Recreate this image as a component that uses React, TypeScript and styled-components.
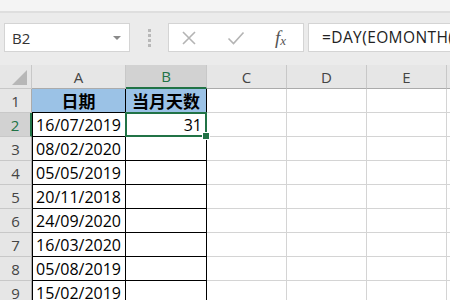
import { createGlobalStyle, styled } from "styled-components";

const GlobalStyle = createGlobalStyle`
  html, body {
    margin: 0;
    padding: 0;
    width: 450px;
    height: 300px;
    overflow: hidden;
    background: #ffffff;
  }
`;

const dates = [
  "16/07/2019",
  "08/02/2020",
  "05/05/2019",
  "20/11/2018",
  "24/09/2020",
  "16/03/2020",
  "05/08/2019",
  "15/02/2019",
];

const columns = ["A", "B", "C", "D", "E", "F"];
const colWidths = "32px 94px 81px 80px 80px 80px 80px";

export default function App() {
  return (
    <>
      <GlobalStyle />
      <Window>
        <TopStrip />
        <FormulaBar>
          <NameBox>
            <span>B2</span>
            <DropArrow />
          </NameBox>
          <Grip>
            <i />
            <i />
            <i />
            <i />
          </Grip>
          <ActionBox>
            <ActionIcon>
              <svg width="16" height="16" viewBox="0 0 16 16">
                <path d="M2 2 L14 14 M14 2 L2 14" stroke="#b4b4b4" strokeWidth="1.6" fill="none" />
              </svg>
            </ActionIcon>
            <ActionIcon>
              <svg width="18" height="16" viewBox="0 0 18 16">
                <path d="M1.5 8.5 L6.5 13.5 L16.5 2.5" stroke="#b4b4b4" strokeWidth="1.6" fill="none" />
              </svg>
            </ActionIcon>
            <FxIcon>
              f<sub>x</sub>
            </FxIcon>
          </ActionBox>
          <FormulaInput>=DAY(EOMONTH(A2,0))</FormulaInput>
        </FormulaBar>
        <Sheet>
          <Corner>
            <CornerTriangle />
          </Corner>
          {columns.map((c) => (
            <ColHeader key={c} $active={c === "B"}>
              {c}
            </ColHeader>
          ))}

          <RowHeader $active={false}>1</RowHeader>
          <TitleCell>日期</TitleCell>
          <TitleCell>当月天数</TitleCell>
          {columns.slice(2).map((c) => (
            <EmptyCell key={c} />
          ))}

          {dates.map((d, i) => {
            const row = i + 2;
            return (
              <Row key={d + row}>
                <RowHeader $active={row === 2}>{row}</RowHeader>
                <DateCell>{d}</DateCell>
                {row === 2 ? (
                  <SelectedCell>
                    31
                    <FillHandle />
                  </SelectedCell>
                ) : (
                  <ValueCell />
                )}
                {columns.slice(2).map((c) => (
                  <EmptyCell key={c} />
                ))}
              </Row>
            );
          })}
        </Sheet>
      </Window>
    </>
  );
}

function Row({ children }: { children: React.ReactNode }) {
  return <>{children}</>;
}

const Window = styled.div`
  width: 450px;
  height: 300px;
  overflow: hidden;
  background: #ebebeb;
  font-family: "Open Sans", "Noto Sans", sans-serif;
`;

const TopStrip = styled.div`
  height: 11px;
  background: #f4f4f4;
  border-bottom: 2px solid #dedede;
`;

const FormulaBar = styled.div`
  height: 49px;
  display: flex;
  align-items: flex-start;
  padding: 10px 0 0 4px;
  box-sizing: border-box;
`;

const NameBox = styled.div`
  width: 126px;
  height: 29px;
  box-sizing: border-box;
  background: #ffffff;
  border: 1px solid #d4d4d4;
  display: flex;
  align-items: center;
  justify-content: space-between;
  padding: 0 8px 0 7px;
  font-size: 15px;
  color: #333333;
`;

const DropArrow = styled.div`
  width: 0;
  height: 0;
  border-left: 4px solid transparent;
  border-right: 4px solid transparent;
  border-top: 4px solid #8a8a8a;
`;

const Grip = styled.div`
  width: 38px;
  height: 29px;
  display: flex;
  flex-direction: column;
  align-items: center;
  justify-content: center;
  gap: 2px;

  i {
    display: block;
    width: 3px;
    height: 3px;
    background: #b8b8b8;
  }
`;

const ActionBox = styled.div`
  width: 136px;
  height: 29px;
  box-sizing: border-box;
  background: #ffffff;
  border: 1px solid #d4d4d4;
  display: flex;
  align-items: center;
  padding-left: 12px;
`;

const ActionIcon = styled.div`
  width: 46px;
  display: flex;
  align-items: center;
`;

const FxIcon = styled.div`
  font-family: "Liberation Serif", serif;
  font-style: italic;
  font-size: 19px;
  color: #555555;
  margin-left: 2px;
  line-height: 1;

  sub {
    font-size: 13px;
    vertical-align: -1px;
  }
`;

const FormulaInput = styled.div`
  margin-left: 4px;
  flex: 1;
  height: 29px;
  box-sizing: border-box;
  background: #ffffff;
  border: 1px solid #d4d4d4;
  border-right: none;
  padding-left: 13px;
  font-size: 15.5px;
  letter-spacing: 0.4px;
  line-height: 27px;
  color: #222222;
  white-space: nowrap;
  overflow: hidden;
`;

const Sheet = styled.div`
  display: grid;
  grid-template-columns: ${colWidths};
  grid-auto-rows: 24px;
  margin-top: 3px;
  background: #ffffff;
`;

const Corner = styled.div`
  background: #e6e6e6;
  border-right: 1px solid #c8c8c8;
  border-bottom: 1px solid #c8c8c8;
  box-sizing: border-box;
  display: flex;
  align-items: flex-end;
  justify-content: flex-end;
  padding: 0 4px 3px 0;
`;

const CornerTriangle = styled.div`
  width: 0;
  height: 0;
  border-left: 15px solid transparent;
  border-bottom: 15px solid #b7b7b7;
`;

const ColHeader = styled.div<{ $active: boolean }>`
  background: ${({ $active }) => ($active ? "#d2d2d2" : "#e6e6e6")};
  color: ${({ $active }) => ($active ? "#217346" : "#444444")};
  border-right: 1px solid #c8c8c8;
  border-bottom: ${({ $active }) => ($active ? "2px solid #217346" : "1px solid #ababab")};
  box-sizing: border-box;
  display: flex;
  align-items: center;
  justify-content: center;
  font-size: 15px;
`;

const RowHeader = styled.div<{ $active: boolean }>`
  background: ${({ $active }) => ($active ? "#d2d2d2" : "#e6e6e6")};
  color: ${({ $active }) => ($active ? "#217346" : "#444444")};
  border-right: ${({ $active }) => ($active ? "2px solid #217346" : "1px solid #ababab")};
  border-bottom: 1px solid #c8c8c8;
  box-sizing: border-box;
  display: flex;
  align-items: center;
  justify-content: center;
  font-size: 15px;
`;

const EmptyCell = styled.div`
  border-right: 1px solid #d4d4d4;
  border-bottom: 1px solid #d4d4d4;
  box-sizing: border-box;
`;

const TitleCell = styled.div`
  background: #9bc2e6;
  border-right: 1px solid #000000;
  border-bottom: 1px solid #000000;
  box-sizing: border-box;
  display: flex;
  align-items: center;
  justify-content: center;
  font-family: "Noto Sans CJK SC", sans-serif;
  font-weight: 700;
  font-size: 17px;
  color: #000000;
`;

const DateCell = styled.div`
  border-left: 1px solid #000000;
  border-right: 1px solid #000000;
  border-bottom: 1px solid #000000;
  box-sizing: border-box;
  display: flex;
  align-items: center;
  justify-content: flex-end;
  padding-right: 4px;
  font-size: 16px;
  color: #000000;
`;

const ValueCell = styled.div`
  border-right: 1px solid #000000;
  border-bottom: 1px solid #000000;
  box-sizing: border-box;
`;

const SelectedCell = styled.div`
  position: relative;
  margin: -1px 0 0 -1px;
  border: 2px solid #217346;
  box-sizing: border-box;
  display: flex;
  align-items: center;
  justify-content: flex-end;
  padding-right: 3px;
  font-size: 16px;
  color: #000000;
  height: 25px;
`;

const FillHandle = styled.div`
  position: absolute;
  right: -5px;
  bottom: -5px;
  width: 6px;
  height: 6px;
  background: #217346;
  border: 1px solid #ffffff;
`;
